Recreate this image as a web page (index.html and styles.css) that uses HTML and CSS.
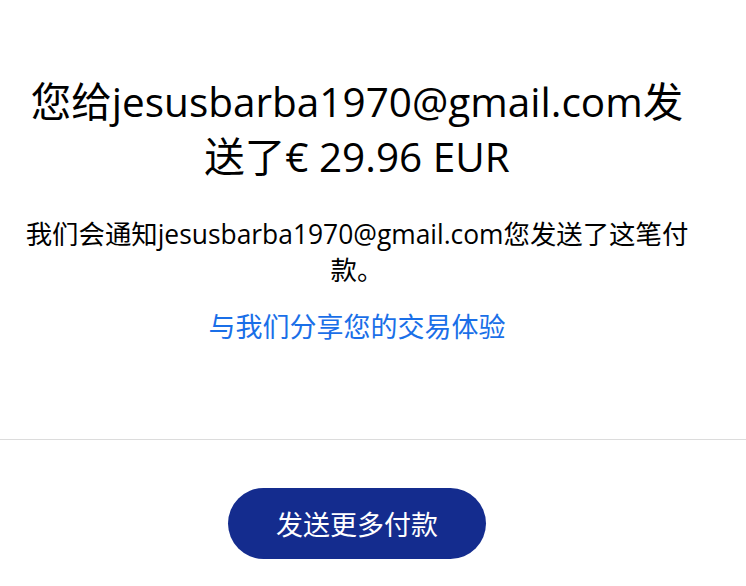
FILE: index.html
```html
<!DOCTYPE html>
<html lang="zh-CN">
<head>
  <meta charset="UTF-8" />
  <meta name="viewport" content="width=device-width, initial-scale=1.0"/>
  <title>付款已发送</title>
  <link rel="stylesheet" href="styles.css">
</head>
<body>

  <main>
    <section class="result">
      <h1>您给jesusbarba1970@gmail.com发送了€ 29.96 EUR</h1>
      <p class="note">我们会通知jesusbarba1970@gmail.com您发送了这笔付款。</p>
      <a class="feedback" href="#">与我们分享您的交易体验</a>
    </section>

    <hr class="divider">

    <div class="actions">
      <button type="button" class="send-more">发送更多付款</button>
    </div>
  </main>

</body>
</html>
```

FILE: styles.css
```css
body {
  font-family: "Open Sans", "Noto Sans CJK SC", sans-serif;
  background-color: #ffffff;
  color: #000000;
  margin: 0;
  padding: 0;
}

.result {
  margin: 0 51px 0 19px;
  padding-top: 74px;
  text-align: center;
}

h1 {
  margin: 0;
  font-size: 40.5px;
  font-weight: 400;
  line-height: 55px;
}

.note {
  margin: 32px 0 0;
  font-size: 26.4px;
  line-height: 36px;
}

.feedback {
  display: inline-block;
  margin-top: 21px;
  font-size: 27px;
  line-height: 36px;
  color: #1a6fe8;
  text-decoration: none;
}

.divider {
  margin: 94px 0 0;
  border: none;
  border-top: 1px solid #dcdcdc;
}

.actions {
  margin: 48px 51px 0 19px;
  text-align: center;
}

.send-more {
  width: 258px;
  height: 71px;
  font-family: inherit;
  font-size: 27px;
  color: #fff;
  background-color: #142c8e;
  border: none;
  border-radius: 36px;
  cursor: pointer;
}
```
